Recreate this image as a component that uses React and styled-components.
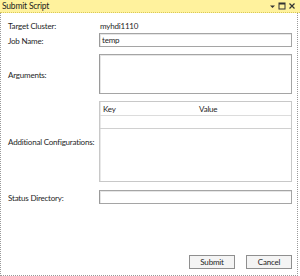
import React from "react";
import styled, { createGlobalStyle } from "styled-components";

const Global = createGlobalStyle`
  html, body { margin: 0; padding: 0; background: #ffffff; }
  body { font-family: Lato, "Open Sans", sans-serif; letter-spacing: -0.2px; }
  * { box-sizing: border-box; }
`;

const Panel = styled.div`
  width: 300px;
  height: 276px;
  display: flex;
  flex-direction: column;
  background: #ffffff;
`;

const TitleBar = styled.div`
  height: 13px;
  background: #fff29d;
  border-bottom: 1px dotted #d8c85a;
  display: flex;
  align-items: center;
  justify-content: space-between;
  padding: 0 4px 0 2px;
  font-size: 8.5px;
  color: #1e1e1e;
  line-height: 12px;
`;

const TitleText = styled.span`
  white-space: nowrap;
`;

const TitleIcons = styled.div`
  display: flex;
  align-items: center;
  gap: 2px;
`;

const Body = styled.div`
  flex: 1;
  width: 298px;
  display: flex;
  flex-direction: column;
  padding: 5px 5px 6px 7px;
  border-left: 1px dotted #9a9a9a;
  border-right: 1px dotted #9a9a9a;
  border-bottom: 1px dotted #9a9a9a;
`;

const Row = styled.div`
  display: grid;
  grid-template-columns: 91px 1fr;
  align-items: center;
  margin-top: ${(p) => p.$gap || 0}px;
  min-height: ${(p) => p.$h || 14}px;
`;

const Label = styled.div`
  font-size: 8px;
  color: #1e1e1e;
  white-space: nowrap;
  padding-top: 1px;
`;

const Value = styled.div`
  font-size: 8px;
  color: #1e1e1e;
  padding: 1px 0 0 1px;
`;

const Input = styled.div`
  height: ${(p) => p.$h || 14}px;
  border: 1px solid #a5a5a5;
  border-left-color: #9a9a9a;
  box-shadow: inset 1px 1px 0 #e6e6e6;
  background: #fff;
  font-size: 8px;
  color: #1e1e1e;
  padding-left: 2px;
  display: flex;
  align-items: center;
`;

const Table = styled.div`
  height: 81px;
  border: 1px solid #c8c8c8;
  box-shadow: inset 1px 0 0 #e8e8e8;
  display: flex;
  flex-direction: column;
`;

const HeaderRow = styled.div`
  height: 14px;
  display: grid;
  grid-template-columns: 96px 1fr;
  align-items: center;
  border-bottom: 1px solid #dcdcdc;
  font-size: 8px;
  color: #1e1e1e;
  padding-left: 3px;
`;

const EmptyRow = styled.div`
  height: 13px;
  border-bottom: 1px solid #d0d0d0;
`;

const Footer = styled.div`
  margin-top: auto;
  display: flex;
  justify-content: flex-end;
  gap: 11px;
`;

const Button = styled.button`
  width: 46px;
  height: 14px;
  padding: 0;
  border: 1px solid #8f8f8f;
  background: #f4f4f4;
  font-family: inherit;
  letter-spacing: inherit;
  font-size: 8px;
  color: #1e1e1e;
  line-height: 12px;
`;

export default function App() {
  return (
    <>
      <Global />
      <Panel>
        <TitleBar>
          <TitleText>Submit Script</TitleText>
          <TitleIcons>
            <svg width="7" height="7" viewBox="0 0 7 7">
              <path d="M1 2.5h5L3.5 5z" fill="#333" />
            </svg>
            <svg width="8" height="8" viewBox="0 0 8 8">
              <rect x="1" y="1" width="6" height="6" fill="none" stroke="#333" strokeWidth="1" />
              <rect x="1" y="1" width="6" height="1.5" fill="#333" />
            </svg>
            <svg width="8" height="8" viewBox="0 0 8 8">
              <path d="M1.5 1.5l5 5M6.5 1.5l-5 5" stroke="#333" strokeWidth="1.2" />
            </svg>
          </TitleIcons>
        </TitleBar>
        <Body>
          <Row $h={14}>
            <Label>Target Cluster:</Label>
            <Value>myhdi1110</Value>
          </Row>
          <Row $gap={1}>
            <Label>Job Name:</Label>
            <Input>temp</Input>
          </Row>
          <Row $gap={7} $h={40}>
            <Label>Arguments:</Label>
            <Input $h={40} />
          </Row>
          <Row $gap={7} $h={81}>
            <Label>Additional Configurations:</Label>
            <Table>
              <HeaderRow>
                <span>Key</span>
                <span>Value</span>
              </HeaderRow>
              <EmptyRow />
            </Table>
          </Row>
          <Row $gap={8}>
            <Label>Status Directory:</Label>
            <Input />
          </Row>
          <Footer>
            <Button>Submit</Button>
            <Button>Cancel</Button>
          </Footer>
        </Body>
      </Panel>
    </>
  );
}
